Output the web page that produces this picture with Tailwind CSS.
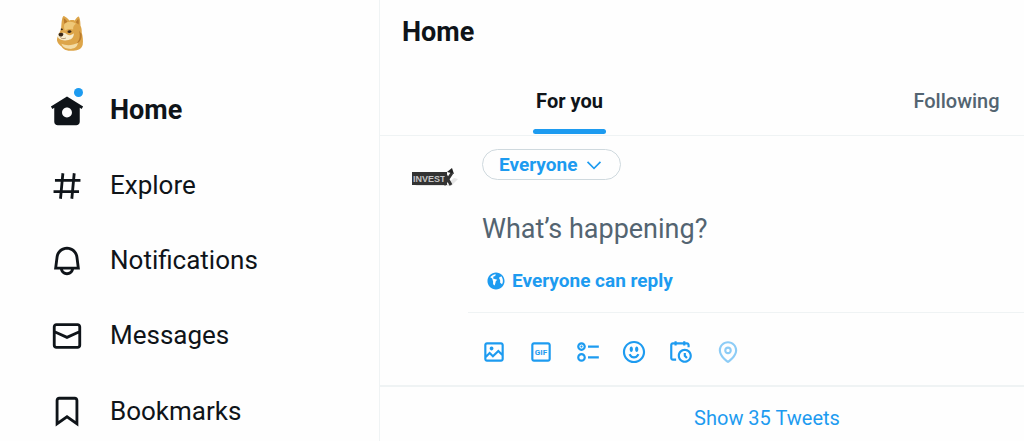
<!DOCTYPE html>
<html lang="en">

<head>
  <meta charset="UTF-8">
  <meta name="viewport" content="width=device-width, initial-scale=1.0">
  <title>Home / Twitter</title>
  <script src="https://cdn.jsdelivr.net/npm/@tailwindcss/browser@4"></script>
</head>

<body class="bg-[#fefefe] font-['Roboto','Liberation_Sans',sans-serif] text-[#0f1419]">
  <div class="flex min-h-screen overflow-hidden">

    <!-- Sidebar -->
    <header class="w-[380px] shrink-0 border-r border-[#eff3f4]">
      <a href="#" aria-label="Twitter" class="flex items-center h-[73px] pl-[55px] pb-2">
        <svg class="w-[30px] h-[42px]" viewBox="45 8 90 132">
          <path fill="#dda549" d="M69 21c3-1 15 8 19 14 6-2 12-2 17 0 3-6 9-14 12-13 4 2 6 17 6 29 4 8 4 14 4 22 3 11 5 24 3 38-4 13-14 18-29 19-18 1-32-3-37-13-8-5-14-12-15-20 0-7 2-12 6-18 2-7 4-12 7-17 1-13 2-38 7-41z" />
          <path fill="#efc878" d="M73 45c8-9 26-9 36 0-6 4-10 9-9 18-8-3-20-2-26 4-3-7-4-15-1-22z" />
          <path fill="#f8edcd" d="M52 80c8-8 20-9 28-2 8 5 16 3 22-3 0 12-5 19-17 21-12 3-25 1-32-7-1-3-2-6-1-9z" />
          <path fill="#f3dca6" d="M63 108c16 7 36 5 52-3-2 12-8 18-22 19-15 0-26-4-30-16z" />
          <path fill="#b97a2c" d="M70 27c5 3 9 7 12 12l-10 6zM116 29c2 6 2 12 1 18l-9-7zM118 66c5 14 3 31-8 41 14-5 18-18 16-30z" />
          <path fill="#3a2818" d="M54 76c4-4 12-4 15 0 1 5-3 9-8 9-4 0-8-4-7-9zM83 67c4-3 10-2 12 2-2 5-9 6-13 3zM61 61c3-2 6-1 7 2-2 3-5 3-7 1z" />
          <path fill="none" stroke="#8a6034" stroke-width="2" d="M60 88c3 4 10 5 17 2" />
        </svg>
      </a>
      <nav class="text-[26px]">
        <a href="#" class="flex items-center gap-[26px] h-[75px] pl-[50px] text-[27px] font-bold">
          <span class="relative">
            <svg class="w-[34px] h-[34px]" viewBox="0 0 24 24" fill="currentColor">
              <path d="M12 1.696L.622 8.807l1.06 1.696L3 9.679V19.5C3 20.881 4.119 22 5.5 22h13c1.381 0 2.5-1.119 2.5-2.5V9.679l1.318.824 1.06-1.696L12 1.696zM12 16.5c-1.933 0-3.5-1.567-3.5-3.5s1.567-3.5 3.5-3.5 3.5 1.567 3.5 3.5-1.567 3.5-3.5 3.5z" />
            </svg>
            <span class="absolute -top-[6px] right-[1px] w-[9px] h-[9px] rounded-full bg-[#1d9bf0]"></span>
          </span>
          Home
        </a>
        <a href="#" class="flex items-center gap-[26px] h-[75px] pl-[50px]">
          <svg class="w-[34px] h-[34px]" viewBox="0 0 24 24" fill="currentColor">
            <path d="M10.09 3.098L9.72 7h5.99l.39-4.089 1.99.187L17.72 7h3.78v2h-3.97l-.56 6h3.53v2h-3.72l-.38 4.089-1.99-.187.37-3.902H8.79l-.38 4.089-1.99-.187L6.79 17H2.5v-2h4.48l.56-6H3.5V7h4.22l.39-4.089 1.98.187zM9.53 9l-.56 6h5.99l.56-6H9.53z" />
          </svg>
          Explore
        </a>
        <a href="#" class="flex items-center gap-[26px] h-[75px] pl-[50px]">
          <svg class="w-[34px] h-[34px]" viewBox="0 0 24 24" fill="currentColor">
            <path d="M19.993 9.042C19.48 5.017 16.054 2 11.996 2s-7.49 3.021-7.999 7.051L2.866 18H7.1c.463 2.282 2.481 4 4.9 4s4.437-1.718 4.9-4h4.236l-1.143-8.958zM12 20c-1.306 0-2.417-.835-2.829-2h5.658c-.412 1.165-1.523 2-2.829 2zm-6.866-4l.847-6.698C6.364 6.272 8.941 4 11.996 4s5.627 2.268 6.013 5.295L18.864 16H5.134z" />
          </svg>
          Notifications
        </a>
        <a href="#" class="flex items-center gap-[26px] h-[75px] pl-[50px]">
          <svg class="w-[34px] h-[34px]" viewBox="0 0 24 24" fill="currentColor">
            <path d="M1.998 5.5c0-1.381 1.119-2.5 2.5-2.5h15c1.381 0 2.5 1.119 2.5 2.5v13c0 1.381-1.119 2.5-2.5 2.5h-15c-1.381 0-2.5-1.119-2.5-2.5v-13zm2.5-.5c-.276 0-.5.224-.5.5v2.764l8 3.638 8-3.636V5.5c0-.276-.224-.5-.5-.5h-15zm15.5 5.463l-8 3.636-8-3.638V18.5c0 .276.224.5.5.5h15c.276 0 .5-.224.5-.5v-8.037z" />
          </svg>
          Messages
        </a>
        <a href="#" class="flex items-center gap-[26px] h-[68px] pt-[8px] pl-[50px]">
          <svg class="w-[34px] h-[34px]" viewBox="0 0 24 24" fill="currentColor">
            <path d="M4 4.5C4 3.12 5.119 2 6.5 2h11C18.881 2 20 3.12 20 4.5v18.44l-8-5.71-8 5.71V4.5zM6.5 4c-.276 0-.5.22-.5.5v14.56l6-4.29 6 4.29V4.5c0-.28-.224-.5-.5-.5h-11z" />
          </svg>
          Bookmarks
        </a>
      </nav>
    </header>

    <!-- Timeline -->
    <main class="grow shrink-0 min-w-[774px]">
      <h1 class="h-[66px] pt-[14px] pl-[22px] text-[27px] leading-[36px] font-bold">Home</h1>

      <!-- Tabs -->
      <div class="flex h-[70px] border-b border-[#eff3f4] text-[20px]">
        <a href="#" class="flex-1 flex justify-center pr-2 font-bold">
          <span class="relative flex items-center">
            For you
            <span class="absolute bottom-[1px] -inset-x-[3px] h-[5px] rounded-full bg-[#1d9bf0]"></span>
          </span>
        </a>
        <a href="#" class="flex-1 flex items-center justify-center pr-2 font-medium text-[#536471]">Following</a>
      </div>

      <!-- Compose box -->
      <form class="flex border-b-2 border-[#eff3f4]">
        <div class="w-[88px] shrink-0 pt-[32px] pl-[32px]">
          <svg class="w-[50px] h-[20px]" viewBox="0 0 50 20" role="img" aria-label="InvestX">
            <path fill="#ccc" opacity=".5" d="M3 17h31l8-7 4 1-7 7H5z" />
            <rect x="0" y="4" width="35" height="13" fill="#333" />
            <text x="1" y="14" font-family="Liberation Sans" font-weight="bold" font-size="9" fill="#c4c4c4">INVEST</text>
            <path fill="none" stroke="#333" stroke-width="3" d="M33 6l6 11M32 17l8-12" />
            <path fill="#222" d="M35 4l5-4 2 6-3-1z" />
          </svg>
        </div>
        <div class="grow text-[#1d9bf0]">
          <div class="pt-[13px] pl-[14px] h-[176px]">
            <div class="relative w-[139px]">
              <select aria-label="Audience" class="block appearance-none w-full h-[31px] pl-4 rounded-full border border-[#cfd9de] text-[19px] leading-[24px] font-bold">
                <option>Everyone</option>
              </select>
              <svg class="absolute right-[17px] top-[6px] w-[20px] h-[20px] pointer-events-none" viewBox="0 0 24 24" fill="currentColor">
                <path d="M3.543 8.96l1.414-1.42L12 14.59l7.043-7.05 1.414 1.42L12 17.41 3.543 8.96z" />
              </svg>
            </div>
            <input type="text" aria-label="Tweet text" placeholder="What’s happening?" class="block w-full h-[40px] mt-[29px] text-[27px] text-[#0f1419] placeholder-[#536471] outline-none">
            <button type="button" class="flex items-center gap-[6px] mt-[20px] pl-1 text-[19px] leading-[24px] font-bold">
              <svg class="w-[20px] h-[20px]" viewBox="0 0 24 24" fill="currentColor">
                <path d="M12 1.75C6.34 1.75 1.75 6.34 1.75 12S6.34 22.25 12 22.25 22.25 17.66 22.25 12 17.66 1.75 12 1.75zm-.25 10.48L10.5 17.5l-2-1.5v-3.5L7.5 9 5.03 7.59c1.42-2.24 3.89-3.75 6.72-3.84L11 6l-2 .5L8.5 9l5 1.5-1.75 1.73zM17 14v-3l-1.5-3 2.88-1.59C19.58 7.93 20.25 9.89 20.25 12c0 1.45-.37 2.8-1.02 3.99L17 14z" />
              </svg>
              Everyone can reply
            </button>
          </div>

          <div class="h-[73px] pt-[5px] pl-[3px] border-t border-[#eff3f4]">
            <div class="grid grid-cols-6 items-center justify-items-center w-[280px] h-[68px]">
              <button type="button" aria-label="Media">
                <svg class="w-[26px] h-[26px]" viewBox="0 0 24 24" fill="currentColor">
                  <path d="M3 5.5C3 4.119 4.119 3 5.5 3h13C19.881 3 21 4.119 21 5.5v13c0 1.381-1.119 2.5-2.5 2.5h-13C4.119 21 3 19.881 3 18.5v-13zM5.5 5c-.276 0-.5.224-.5.5v9.086l3-3 3 3 5-5 3 3V5.5c0-.276-.224-.5-.5-.5h-13zM19 15.414l-3-3-5 5-3-3-3 3V18.5c0 .276.224.5.5.5h13c.276 0 .5-.224.5-.5v-3.086zM9.75 7C8.784 7 8 7.784 8 8.75s.784 1.75 1.75 1.75 1.75-.784 1.75-1.75S10.716 7 9.75 7z" />
                </svg>
              </button>
              <button type="button" aria-label="GIF">
                <svg class="w-[26px] h-[26px]" viewBox="0 0 24 24" fill="currentColor">
                  <path d="M3 5.5C3 4.119 4.12 3 5.5 3h13C19.88 3 21 4.119 21 5.5v13c0 1.381-1.12 2.5-2.5 2.5h-13C4.12 21 3 19.881 3 18.5v-13zM5.5 5c-.28 0-.5.224-.5.5v13c0 .276.22.5.5.5h13c.28 0 .5-.224.5-.5v-13c0-.276-.22-.5-.5-.5h-13z" />
                  <text x="12" y="14.6" text-anchor="middle" font-family="Roboto" font-weight="bold" font-size="7.5">GIF</text>
                </svg>
              </button>
              <button type="button" aria-label="Poll">
                <svg class="w-[26px] h-[26px]" viewBox="0 0 24 24" fill="currentColor">
                  <path d="M6 5c-1.1 0-2 .895-2 2s.9 2 2 2 2-.895 2-2-.9-2-2-2zM2 7c0-2.209 1.79-4 4-4s4 1.791 4 4-1.79 4-4 4-4-1.791-4-4zm20 1H12V6h10v2zM6 15c-1.1 0-2 .895-2 2s.9 2 2 2 2-.895 2-2-.9-2-2-2zm-4 2c0-2.209 1.79-4 4-4s4 1.791 4 4-1.79 4-4 4-4-1.791-4-4zm20 1H12v-2h10v2zM7 7c0 .552-.45 1-1 1s-1-.448-1-1 .45-1 1-1 1 .448 1 1z" />
                </svg>
              </button>
              <button type="button" aria-label="Emoji">
                <svg class="w-[26px] h-[26px]" viewBox="0 0 24 24" fill="currentColor">
                  <path d="M8 9.5C8 8.119 8.672 7 9.5 7S11 8.119 11 9.5 10.328 12 9.5 12 8 10.881 8 9.5zm6.5 2.5c.828 0 1.5-1.119 1.5-2.5S15.328 7 14.5 7 13 8.119 13 9.5s.672 2.5 1.5 2.5zM12 16c-2.224 0-3.021-2.227-3.051-2.316l-1.897.633c.05.15 1.271 3.684 4.949 3.684s4.898-3.533 4.949-3.684l-1.896-.638c-.033.095-.83 2.322-3.053 2.322zm10.25-4.001c0 5.652-4.598 10.25-10.25 10.25S1.75 17.652 1.75 12 6.348 1.75 12 1.75 22.25 6.348 22.25 12zm-2 0c0-4.549-3.701-8.25-8.25-8.25S3.75 7.451 3.75 12s3.701 8.25 8.25 8.25 8.25-3.701 8.25-8.25z" />
                </svg>
              </button>
              <button type="button" aria-label="Schedule">
                <svg class="w-[26px] h-[26px]" viewBox="0 0 24 24" fill="currentColor">
                  <path d="M6 3V2h2v1h6V2h2v1h1.5C18.88 3 20 4.119 20 5.5v2h-2v-2c0-.276-.22-.5-.5-.5H16v1h-2V5H8v1H6V5H4.5c-.28 0-.5.224-.5.5v12c0 .276.22.5.5.5h3v2h-3C3.12 20 2 18.881 2 17.5v-12C2 4.119 3.12 3 4.5 3H6zm9.5 8c-2.49 0-4.5 2.015-4.5 4.5s2.01 4.5 4.5 4.5 4.5-2.015 4.5-4.5-2.01-4.5-4.5-4.5zM9 15.5C9 11.91 11.91 9 15.5 9s6.5 2.91 6.5 6.5-2.91 6.5-6.5 6.5S9 19.09 9 15.5zm5.5-2.5h2v2.086l1.71 1.707-1.42 1.414-2.29-2.293V13z" />
                </svg>
              </button>
              <button type="button" aria-label="Location" disabled class="opacity-50">
                <svg class="w-[26px] h-[26px]" viewBox="0 0 24 24" fill="currentColor">
                  <path d="M12 7c-1.93 0-3.5 1.57-3.5 3.5S10.07 14 12 14s3.5-1.57 3.5-3.5S13.93 7 12 7zm0 5c-.827 0-1.5-.673-1.5-1.5S11.173 9 12 9s1.5.673 1.5 1.5S12.827 12 12 12zm0-10c-4.687 0-8.5 3.813-8.5 8.5 0 5.967 7.621 11.116 7.945 11.332l.555.37.555-.37c.324-.216 7.945-5.365 7.945-11.332C20.5 5.813 16.687 2 12 2zm0 17.77c-1.665-1.241-6.5-5.196-6.5-9.27C5.5 6.916 8.416 4 12 4s6.5 2.916 6.5 6.5c0 4.073-4.835 8.028-6.5 9.27z" />
                </svg>
              </button>
            </div>
          </div>
        </div>
      </form>

      <button type="button" class="block w-full pt-[19px] text-[20px] leading-[24px] text-[#1d9bf0]">Show 35 Tweets</button>
    </main>
  </div>
</body>

</html>
